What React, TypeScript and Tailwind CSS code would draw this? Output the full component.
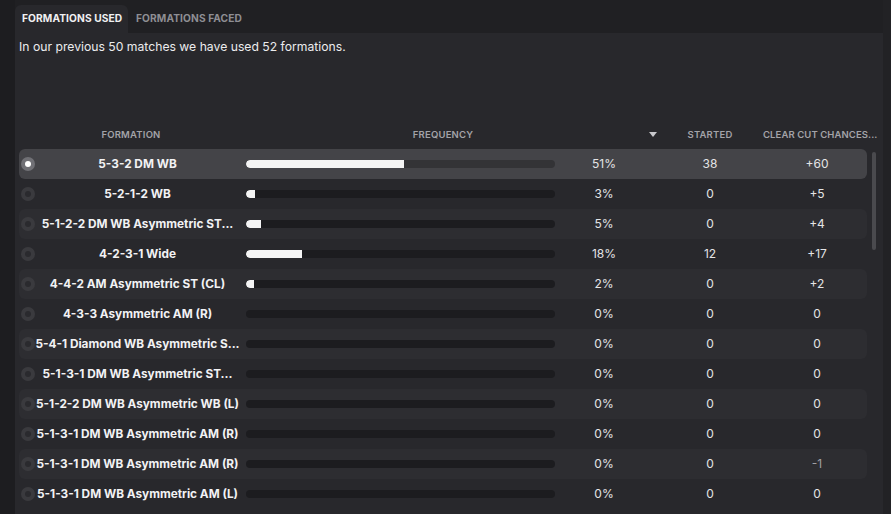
import React from 'react'

type Row = { name: string; pct: number; started: number; ccc: string }

const rows: Row[] = [
    { name: '5-3-2 DM WB', pct: 51, started: 38, ccc: '+60' },
    { name: '5-2-1-2 WB', pct: 3, started: 0, ccc: '+5' },
    { name: '5-1-2-2 DM WB Asymmetric ST...', pct: 5, started: 0, ccc: '+4' },
    { name: '4-2-3-1 Wide', pct: 18, started: 12, ccc: '+17' },
    { name: '4-4-2 AM Asymmetric ST (CL)', pct: 2, started: 0, ccc: '+2' },
    { name: '4-3-3 Asymmetric AM (R)', pct: 0, started: 0, ccc: '0' },
    { name: '5-4-1 Diamond WB Asymmetric S...', pct: 0, started: 0, ccc: '0' },
    { name: '5-1-3-1 DM WB Asymmetric ST...', pct: 0, started: 0, ccc: '0' },
    { name: '5-1-2-2 DM WB Asymmetric WB (L)', pct: 0, started: 0, ccc: '0' },
    { name: '5-1-3-1 DM WB Asymmetric AM (R)', pct: 0, started: 0, ccc: '0' },
    { name: '5-1-3-1 DM WB Asymmetric AM (R)', pct: 0, started: 0, ccc: '-1' },
    { name: '5-1-3-1 DM WB Asymmetric AM (L)', pct: 0, started: 0, ccc: '0' },
]

const BAR_W = 309

export default function App() {
    return (
        <div
            className="w-[891px] h-[514px] bg-[#1d1d20] flex overflow-hidden text-[#e6e6e8]"
            style={{ fontFamily: 'Inter, "Noto Sans", sans-serif' }}
        >
            <div className="w-[15px] shrink-0" />

            <div className="w-[868px] shrink-0 flex flex-col">
                {/* tabs */}
                <div className="h-[33px] shrink-0 bg-[#202023] flex items-end">
                    <div className="h-[28px] w-[113px] rounded-t-md bg-[#28282c] flex items-center pl-[7px] text-[10.2px] font-bold tracking-[0.01em] text-[#f0f0f2]">
                        FORMATIONS USED
                    </div>
                    <div className="h-[28px] flex items-center pl-[8px] text-[10.2px] font-bold tracking-[0.01em] text-[#8e8e93]">
                        FORMATIONS FACED
                    </div>
                </div>

                <div className="flex-1 bg-[#28282c] flex flex-col">
                    <div className="pl-[4px] pt-[5px] h-[95px] text-[12.2px] text-[#ececee]">
                        In our previous 50 matches we have used 52 formations.
                    </div>

                    {/* header */}
                    <div className="h-[20px] flex items-start text-[9.5px] font-semibold text-[#a3a3a8] tracking-[0.02em]">
                        <div className="w-[4px]" />
                        <div className="w-[224px] text-center">FORMATION</div>
                        <div className="w-[3px]" />
                        <div className="w-[394px] text-center">FREQUENCY</div>
                        <div className="w-[25px] flex justify-center pt-[4px]">
                            <svg width="8" height="5" viewBox="0 0 8 5">
                                <path d="M0 0 H8 L4 5 Z" fill="#c8c8cc" />
                            </svg>
                        </div>
                        <div className="w-[90px] text-center">STARTED</div>
                        <div className="w-[8px]" />
                        <div className="w-[120px] whitespace-nowrap tracking-[0.01em]">CLEAR CUT CHANCES...</div>
                    </div>

                    {/* rows */}
                    <div className="flex pl-[4px] pt-[1px]">
                        <div className="w-[848px] flex flex-col">
                            {rows.map((r, i) => {
                                const sel = i === 0
                                const stripe = i % 2 === 0 && !sel
                                return (
                                    <div
                                        key={i}
                                        className={`h-[30px] grid grid-cols-[16px_205px_6px_309px_98px_114px_100px] items-center rounded-md ${
                                            sel ? 'bg-[#444448]' : stripe ? 'bg-[#2d2d31]' : ''
                                        }`}
                                    >
                                        <div className="flex justify-end">
                                            {sel ? (
                                                <div className="w-[14px] h-[14px] rounded-full bg-[#707075] flex items-center justify-center">
                                                    <div className="w-[6px] h-[6px] rounded-full bg-white" />
                                                </div>
                                            ) : (
                                                <div className="w-[14px] h-[14px] rounded-full bg-[#3a3a3e] flex items-center justify-center">
                                                    <div className="w-[6px] h-[6px] rounded-full bg-[#2a2a2e]" />
                                                </div>
                                            )}
                                        </div>
                                        <div className="text-center text-[11.8px] leading-[14px] font-bold text-[#f2f2f4] whitespace-nowrap">
                                            {r.name}
                                        </div>
                                        <div />
                                        <div className={`h-[8px] rounded-full overflow-hidden ${sel ? 'bg-[#333336]' : 'bg-[#1c1c1f]'}`}>
                                            {r.pct > 0 && (
                                                <div
                                                    className="h-full bg-[#f4f4f4] rounded-l-full"
                                                    style={{ width: Math.max(8, Math.round((r.pct / 100) * BAR_W)) }}
                                                />
                                            )}
                                        </div>
                                        <div className="text-center text-[12px] text-[#e4e4e6]">{r.pct}%</div>
                                        <div className="text-center text-[12px] text-[#e4e4e6]">{r.started}</div>
                                        <div className={`text-center text-[12px] ${r.ccc === '-1' ? 'text-[#a0a0a4]' : 'text-[#e4e4e6]'}`}>
                                            {r.ccc}
                                        </div>
                                    </div>
                                )
                            })}
                        </div>
                        <div className="w-[5px]" />
                        <div className="pt-[3px]">
                            <div className="w-[4px] h-[98px] rounded-full bg-[#4a4a4e]" />
                        </div>
                    </div>
                </div>
            </div>

            <div className="flex-1 bg-[#222225]" />
        </div>
    )
}
